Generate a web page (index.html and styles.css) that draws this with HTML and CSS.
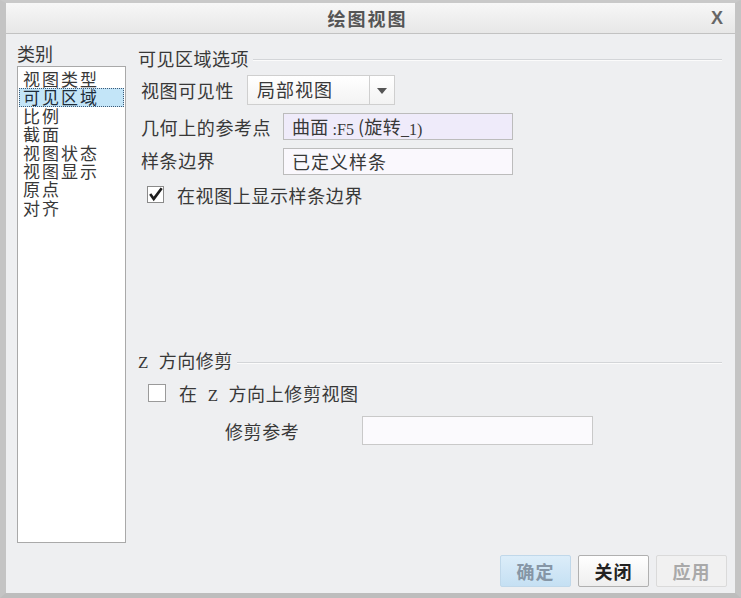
FILE: index.html
```html
<!DOCTYPE html>
<html lang="zh-CN">
<head>
    <meta charset="UTF-8">
    <title>绘图视图</title>
    <link rel="stylesheet" href="styles.css">
</head>
<body>
    <div class="dialog">
        <div class="titlebar">
            <span class="title">绘图视图</span>
            <span class="close">X</span>
        </div>

        <div class="content">
            <div class="body">
                <!-- category list -->
                <div class="sidebar">
                    <div class="side-label">类别</div>
                    <ul class="category-list">
                        <li>视图类型</li>
                        <li class="selected">可见区域</li>
                        <li>比例</li>
                        <li>截面</li>
                        <li>视图状态</li>
                        <li>视图显示</li>
                        <li>原点</li>
                        <li>对齐</li>
                    </ul>
                </div>

                <div class="main">
                    <div class="group-title"><span>可见区域选项</span></div>

                    <div class="row row-visibility">
                        <span class="label">视图可见性</span>
                        <div class="select">
                            <span class="select-value">局部视图</span>
                            <span class="select-arrow"><i></i></span>
                        </div>
                    </div>

                    <div class="row row-field">
                        <span class="label label-wide">几何上的参考点</span>
                        <div class="field field-active">曲面<span class="latin"> :F5 </span>(旋转<span class="latin">_1)</span></div>
                    </div>

                    <div class="row row-field row-spline">
                        <span class="label label-wide label-top">样条边界</span>
                        <div class="field">已定义样条</div>
                    </div>

                    <label class="check-row">
                        <span class="checkbox checked">
                            <svg width="17" height="17" viewBox="0 0 17 17"><path d="M2.5 8 L6.5 13.5 L15.5 1.5" fill="none" stroke="#1e1e1e" stroke-width="3"/></svg>
                        </span>
                        在视图上显示样条边界
                    </label>

                    <div class="group-title group-z"><span><span class="latin latin-z">Z </span>方向修剪</span></div>

                    <label class="check-row check-z">
                        <span class="checkbox"></span>
                        <span>在<span class="latin latin-z"> Z </span>方向上修剪视图</span>
                    </label>

                    <div class="row row-trim">
                        <span class="label label-trim">修剪参考</span>
                        <div class="field field-trim"></div>
                    </div>
                </div>
            </div>

            <div class="footer">
                <button class="btn btn-ok">确定</button>
                <button class="btn btn-close">关闭</button>
                <button class="btn btn-apply">应用</button>
            </div>
        </div>
    </div>
</body>
</html>
```

FILE: styles.css
```css
html, body {
    margin: 0;
    padding: 0;
}
body {
    width: 741px;
    height: 598px;
    overflow: hidden;
    font-family: "Noto Sans CJK SC", sans-serif;
    font-size: 18px;
    color: #383838;
    background: #eeeff1;
}
.dialog {
    box-sizing: border-box;
    width: 741px;
    height: 598px;
    border-top: 3px solid #c9c9c9;
    border-left: 6px solid #c4c4c4;
    border-right: 6px solid #c4c4c4;
    border-bottom: 5px solid #bdbdbd;
    display: flex;
    flex-direction: column;
}
.titlebar {
    height: 30px;
    border-bottom: 1px solid #c2c2c2;
    background: linear-gradient(to bottom, #f7f7f7, #e7e7e7);
    display: flex;
    align-items: center;
    justify-content: center;
    position: relative;
}
.title {
    font-weight: bold;
    font-size: 18px;
    letter-spacing: 2px;
    color: #555;
    margin-left: -6px;
}
.close {
    position: absolute;
    right: 12px;
    top: 5px;
    font-family: "Liberation Sans", sans-serif;
    font-weight: bold;
    font-size: 18px;
    color: #666;
}
.content {
    flex: 1;
    display: flex;
    flex-direction: column;
    padding: 8px 8px 6px 11px;
}
.body {
    display: flex;
    gap: 12px;
}
.sidebar {
    width: 109px;
    display: flex;
    flex-direction: column;
}
.side-label {
    height: 24px;
    line-height: 22px;
}
.category-list {
    list-style: none;
    margin: 0;
    padding: 3px 1px;
    height: 477px;
    box-sizing: border-box;
    background: #fff;
    border: 1px solid #a9a9a9;
}
.category-list li {
    height: 16.4px;
    line-height: 16px;
    font-size: 17px;
    padding-left: 3px;
    letter-spacing: 2px;
    border: 1px dotted transparent;
}
.category-list li.selected {
    background: #c3e5f8;
    border-color: #3d5a78;
    color: #1e2c3a;
}
.main {
    flex: 1;
    padding-top: 4px;
    margin-right: 5px;
}
.group-title {
    display: flex;
    align-items: center;
    height: 24px;
    line-height: 24px;
    letter-spacing: 0.5px;
}
.group-title::after {
    content: "";
    flex: 1;
    margin-left: 4px;
    margin-top: 2px;
    border-top: 1px solid #d3d5d8;
    box-shadow: 0 1px 0 #fbfbfb;
}
.latin {
    font-family: "Liberation Mono", monospace;
    font-size: 15px;
    vertical-align: -1px;
    white-space: pre;
    letter-spacing: 0;
}
.latin-z {
    font-family: "Liberation Serif", serif;
    font-size: 17px;
    vertical-align: 0;
    word-spacing: 6px;
}
.row {
    display: flex;
    align-items: center;
    padding-left: 3px;
}
.label {
    letter-spacing: 0.6px;
}
.label-wide {
    width: 142px;
}
.label-top {
    align-self: flex-start;
    margin-top: -1px;
}
.row-visibility {
    margin-top: 5px;
    gap: 13px;
}
.select {
    display: flex;
    height: 30px;
    width: 148px;
    box-sizing: border-box;
    border: 1px solid #cfcfcf;
    background: linear-gradient(to bottom, #ffffff, #f3f3f3);
}
.select-value {
    flex: 1;
    padding-left: 9px;
    line-height: 27px;
    letter-spacing: 1px;
}
.select-arrow {
    width: 24px;
    border-left: 1px solid #cfcfcf;
    display: flex;
    align-items: center;
    justify-content: center;
}
.select-arrow i {
    width: 0;
    height: 0;
    border-left: 5px solid transparent;
    border-right: 5px solid transparent;
    border-top: 6px solid #555;
    margin-top: 2px;
}
.row-field {
    margin-top: 8px;
}
.field {
    width: 230px;
    height: 27px;
    box-sizing: border-box;
    border: 1px solid #bcbcbc;
    background: #faf8fd;
    padding-left: 8px;
    line-height: 25px;
    letter-spacing: 1px;
    white-space: nowrap;
}
.field-active {
    background: #efebfa;
    letter-spacing: 0.3px;
}
.field-active .latin {
    font-family: "Liberation Serif", serif;
    font-size: 16px;
}
.check-row {
    display: flex;
    align-items: center;
    gap: 13px;
    margin-top: 10px;
    padding-left: 9px;
    height: 19px;
    letter-spacing: 0.6px;
}
.checkbox {
    width: 17px;
    height: 17px;
    box-sizing: border-box;
    border: 1px solid #9a9a9a;
    background: #fff;
    display: flex;
    align-items: center;
    justify-content: center;
    overflow: visible;
}
.checkbox.checked {
    border-color: #8a8a8a;
}
.group-z {
    margin-top: 145px;
}
.check-z {
    margin-top: 10px;
    padding-left: 10px;
}
.check-z .checkbox {
    width: 18px;
    height: 18px;
}
.row-trim {
    margin-top: 14px;
    padding-left: 87px;
}
.label-trim {
    width: 137px;
}
.field-trim {
    width: 231px;
    height: 29px;
    background: #fbfafd;
    border-color: #c9c9c9;
}
.footer {
    margin-top: 12px;
    display: flex;
    justify-content: flex-end;
    gap: 7px;
}
.btn {
    width: 71px;
    height: 32px;
    box-sizing: border-box;
    font-family: "Noto Sans CJK SC", sans-serif;
    font-size: 18px;
    font-weight: bold;
    letter-spacing: 1px;
    padding: 0;
    border-radius: 2px;
    cursor: pointer;
}
.btn-ok {
    background: linear-gradient(to bottom, #dcedf9, #c5e0f3);
    border: 1px solid #c0d8ea;
    color: #8696a6;
}
.btn-close {
    background: linear-gradient(to bottom, #ffffff, #eeeeee);
    border: 1px solid #b0b0b0;
    color: #222;
}
.btn-apply {
    background: #f1f1f1;
    border: 1px solid #dadada;
    color: #a9a9a9;
}
```
